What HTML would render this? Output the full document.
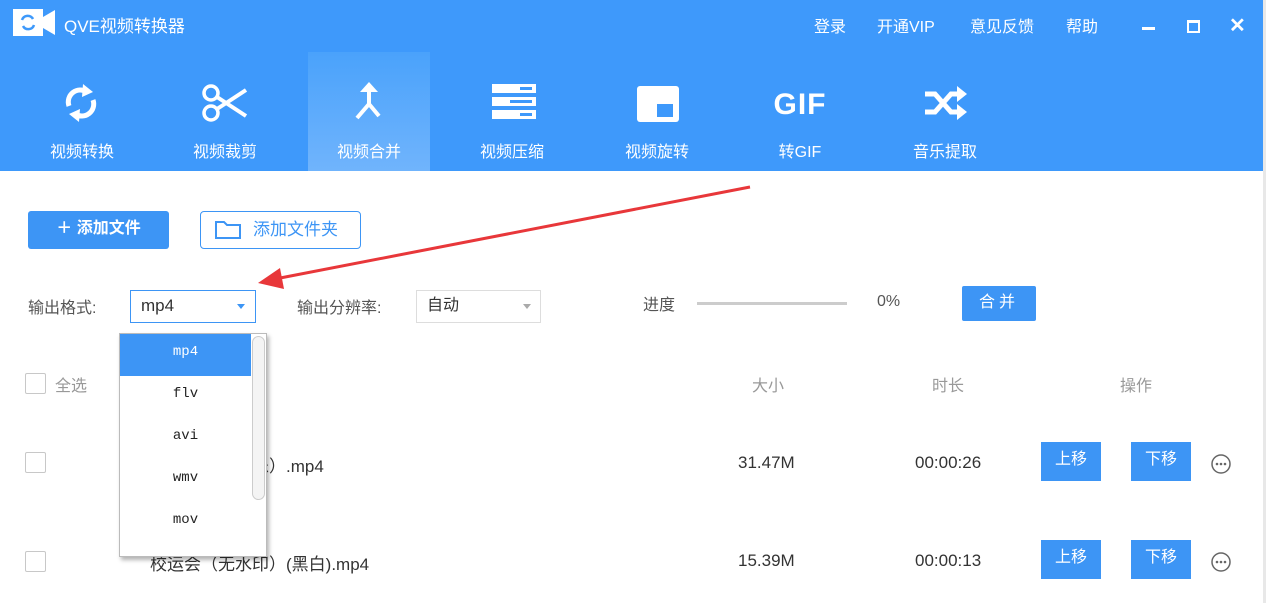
<!DOCTYPE html>
<html><head><meta charset="utf-8"><style>
*{margin:0;padding:0;box-sizing:border-box}
body{width:1266px;height:603px;overflow:hidden;background:#fff;font-family:"Liberation Sans","Noto Sans CJK SC",sans-serif;position:relative;color:#333}
.abs{position:absolute}
.hdr{position:absolute;left:0;top:0;width:1266px;height:171px;background:#3e99fb}
.t{color:#fff;font-size:16px}
.tab{position:absolute;top:52px;width:122px;height:119px;text-align:center;color:#fff;font-size:16px}
.tab .lb{position:absolute;top:86px;left:0;width:100%}
.tab svg{position:absolute;left:41px;top:30px}
.act{background:linear-gradient(#4aa2fb,#70b4fc)}
.btn{position:absolute;background:#3d95f5;color:#fff;font-size:16px;text-align:center}
.cb{position:absolute;width:21px;height:21px;border:1px solid #c8c8c8;border-radius:2px;background:#fff}
.g{color:#999;font-size:16px}
.dd{position:absolute;left:119px;top:333px;width:148px;height:224px;background:#fff;border:1px solid #bbb;box-shadow:2px 3px 4px rgba(0,0,0,.3)}
.dd div{height:42px;line-height:36px;text-align:center;width:131px;font-family:"Liberation Mono",monospace;font-size:14px;color:#222}
</style></head><body>
<div class="hdr"></div>
<svg class="abs" style="left:13px;top:9px" width="44" height="27"><rect x="0" y="0" width="30" height="27" fill="#fff"/><polygon points="30,8 42,1 42,26 30,19" fill="#fff"/><path d="M9 11a6 6 0 0 1 11-1M21 16a6 6 0 0 1-11 1" stroke="#3e99fb" stroke-width="2.5" fill="none"/></svg>
<div class="abs t" style="left:64px;top:12px;font-size:17px">QVE视频转换器</div>
<div class="abs t" style="left:814px;top:13px">登录</div>
<div class="abs t" style="left:877px;top:13px">开通VIP</div>
<div class="abs t" style="left:970px;top:13px">意见反馈</div>
<div class="abs t" style="left:1066px;top:13px">帮助</div>
<div class="abs" style="left:1142px;top:27px;width:13px;height:3px;background:#fff"></div>
<div class="abs" style="left:1187px;top:20px;width:13px;height:13px;border:2px solid #fff;border-top-width:3px"></div>
<div class="abs t" style="left:1229px;top:13px;font-size:20px;font-weight:bold">✕</div>

<div class="tab" style="left:21px"><svg width="40" height="46" viewBox="0 0 40 42" style="left:40px;top:28px"><path d="M8 24a12 12 0 0 1 18-14M32 18a12 12 0 0 1-18 14" stroke="#fff" stroke-width="5" fill="none"/><polygon points="22,2 32,10 21,15" fill="#fff"/><polygon points="18,40 8,32 19,27" fill="#fff"/></svg><div class="lb">视频转换</div></div>
<div class="tab" style="left:164px"><svg width="50" height="42" viewBox="0 0 50 42" style="left:36px"><circle cx="11" cy="11" r="7" stroke="#fff" stroke-width="3.5" fill="none"/><circle cx="11" cy="31" r="7" stroke="#fff" stroke-width="3.5" fill="none"/><path d="M17 15L46 34M17 27L46 8" stroke="#fff" stroke-width="4"/></svg><div class="lb">视频裁剪</div></div>
<div class="tab act" style="left:308px"><svg width="40" height="46" viewBox="0 0 40 42" style="top:28px"><path d="M20 4V22L8 36M20 22L30 34" stroke="#fff" stroke-width="4" fill="none"/><polygon points="20,0 29,10 11,10" fill="#fff"/></svg><div class="lb">视频合并</div></div>
<div class="tab" style="left:451px"><svg width="44" height="40" viewBox="0 0 44 40"><rect x="0" y="2" width="44" height="9" fill="#fff"/><rect x="0" y="15" width="44" height="9" fill="#fff"/><rect x="0" y="28" width="44" height="9" fill="#fff"/><rect x="28" y="5" width="12" height="3" fill="#3e99fb"/><rect x="18" y="18" width="22" height="3" fill="#3e99fb"/><rect x="28" y="31" width="12" height="3" fill="#3e99fb"/></svg><div class="lb">视频压缩</div></div>
<div class="tab" style="left:596px"><svg width="42" height="40" viewBox="0 0 42 40"><rect x="0" y="4" width="42" height="36" rx="3" fill="#fff"/><rect x="20" y="22" width="16" height="13" fill="#3e99fb"/></svg><div class="lb">视频旋转</div></div>
<div class="tab" style="left:739px"><div style="position:absolute;top:36px;width:100%;font-size:30px;font-weight:bold;letter-spacing:1px">GIF</div><div class="lb">转GIF</div></div>
<div class="tab" style="left:884px"><svg width="44" height="40" viewBox="0 0 44 40"><path d="M0 12h10l16 18h8M0 30h10l16-18h8" stroke="#fff" stroke-width="5" fill="none"/><polygon points="32,4 42,12 32,20" fill="#fff"/><polygon points="32,22 42,30 32,38" fill="#fff"/></svg><div class="lb">音乐提取</div></div>

<div class="btn" style="left:28px;top:211px;width:141px;height:38px;line-height:36px;border-radius:3px;font-weight:bold">＋ 添加文件</div>
<div class="abs" style="left:200px;top:211px;width:161px;height:38px;border:1.5px solid #3d95f5;border-radius:4px;color:#3d95f5;font-size:17px;line-height:36px;padding-left:52px">添加文件夹</div>
<svg class="abs" style="left:214px;top:220px" width="28" height="20"><path d="M2 2h8l3 3h13v13H2z" stroke="#3d95f5" stroke-width="2" fill="none"/></svg>

<div class="abs" style="left:28px;top:294px;font-size:16px;color:#555">输出格式:</div>
<div class="abs" style="left:130px;top:290px;width:126px;height:33px;border:1.5px solid #3d95f5;font-size:17px;line-height:30px;padding-left:10px">mp4</div>
<div class="abs" style="left:237px;top:304px;border:4px solid transparent;border-top:5px solid #3d95f5"></div>
<div class="abs" style="left:297px;top:294px;font-size:16px;color:#555">输出分辨率:</div>
<div class="abs" style="left:416px;top:290px;width:125px;height:33px;border:1px solid #ddd;font-size:16px;line-height:30px;padding-left:10px">自动</div>
<div class="abs" style="left:523px;top:304px;border:4px solid transparent;border-top:5px solid #aaa"></div>
<div class="abs" style="left:643px;top:291px;font-size:16px;color:#555">进度</div>
<div class="abs" style="left:697px;top:302px;width:150px;height:3px;background:#ccc"></div>
<div class="abs" style="left:877px;top:293px;font-size:16px;color:#555">0%</div>
<div class="btn" style="left:962px;top:286px;width:74px;height:35px;line-height:33px;border-radius:2px;letter-spacing:4px">合并</div>

<div class="cb" style="left:25px;top:373px"></div><div class="abs g" style="left:55px;top:372px">全选</div>
<div class="abs g" style="left:752px;top:372px">大小</div>
<div class="abs g" style="left:932px;top:372px">时长</div>
<div class="abs g" style="left:1120px;top:372px">操作</div>

<div class="cb" style="left:25px;top:452px"></div>
<div class="abs" style="left:150px;top:452px;font-size:17px">动会（背景音乐）.mp4</div>
<div class="abs" style="left:738px;top:453px;font-size:17px">31.47M</div>
<div class="abs" style="left:915px;top:453px;font-size:17px">00:00:26</div>
<div class="btn" style="left:1041px;top:442px;width:60px;height:39px;line-height:36px">上移</div>
<div class="btn" style="left:1131px;top:442px;width:60px;height:39px;line-height:36px">下移</div>
<svg class="abs" style="left:1210px;top:453px" width="22" height="22"><circle cx="11" cy="11" r="9" stroke="#666" stroke-width="1.5" fill="none"/><circle cx="7" cy="11" r="1.3" fill="#666"/><circle cx="11" cy="11" r="1.3" fill="#666"/><circle cx="15" cy="11" r="1.3" fill="#666"/></svg>

<div class="cb" style="left:25px;top:551px"></div>
<div class="abs" style="left:150px;top:550px;font-size:17px">校运会（无水印）(黑白).mp4</div>
<div class="abs" style="left:738px;top:551px;font-size:17px">15.39M</div>
<div class="abs" style="left:915px;top:551px;font-size:17px">00:00:13</div>
<div class="btn" style="left:1041px;top:540px;width:60px;height:39px;line-height:36px">上移</div>
<div class="btn" style="left:1131px;top:540px;width:60px;height:39px;line-height:36px">下移</div>
<svg class="abs" style="left:1210px;top:551px" width="22" height="22"><circle cx="11" cy="11" r="9" stroke="#666" stroke-width="1.5" fill="none"/><circle cx="7" cy="11" r="1.3" fill="#666"/><circle cx="11" cy="11" r="1.3" fill="#666"/><circle cx="15" cy="11" r="1.3" fill="#666"/></svg>
<div class="abs" style="left:1263px;top:0;width:3px;height:603px;background:#e8e8e8"></div>

<div class="dd">
<div style="background:#3d95f5;color:#fff">mp4</div>
<div>flv</div><div>avi</div><div>wmv</div><div>mov</div>
<span style="position:absolute;left:132px;top:2px;width:13px;height:164px;border:1px solid #ccc;border-radius:7px;background:#f4f4f4"></span>
</div>

<svg class="abs" style="left:0;top:0" width="1266" height="603"><path d="M750 187L275 279" stroke="#e8373a" stroke-width="3"/><polygon points="258,283 280,268 284,289" fill="#e8373a"/></svg>
</body></html>
